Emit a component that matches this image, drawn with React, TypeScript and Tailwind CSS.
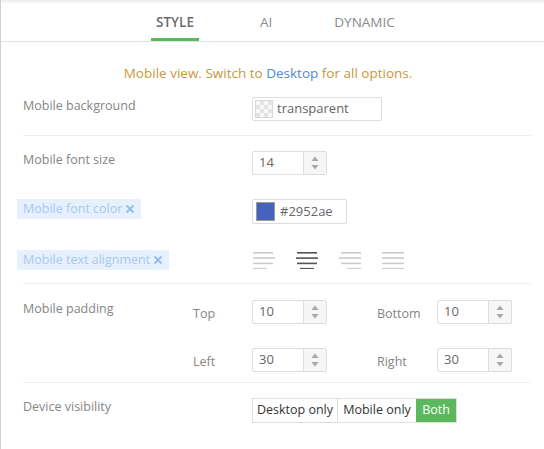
import React from 'react';

const FONT = { fontFamily: '"Open Sans", "Noto Sans", sans-serif' };

function Spinner() {
  return (
    <div className="flex w-[23px] flex-col items-center justify-center gap-[4px] border-l border-[#dddddd] bg-[#f6f6f6]">
      <svg width="8" height="5" viewBox="0 0 8 5">
        <path d="M0.5 5 L4 0.5 L7.5 5 Z" fill="#a8a8a8" />
      </svg>
      <svg width="8" height="5" viewBox="0 0 8 5">
        <path d="M0.5 0 L4 4.5 L7.5 0 Z" fill="#a8a8a8" />
      </svg>
    </div>
  );
}

function NumberInput({ value }: { value: string }) {
  return (
    <div className="flex h-[24px] w-[75px] rounded-[2px] border border-[#dddddd] bg-white">
      <div className="flex flex-1 items-center pl-[6px] text-[13px] text-[#666666]">{value}</div>
      <Spinner />
    </div>
  );
}

function Label({ children }: { children: React.ReactNode }) {
  return <div className="w-[229px] shrink-0 text-[12.5px] leading-[18px] text-[#858585]">{children}</div>;
}

function SubLabel({ children }: { children: React.ReactNode }) {
  return <div className="flex h-[24px] items-center pt-[4px] text-[12.5px] text-[#858585]">{children}</div>;
}

function OverrideLabel({ children }: { children: React.ReactNode }) {
  return (
    <div className="flex w-[229px] shrink-0">
      <span className="-ml-[6px] flex h-[20px] items-center gap-[3px] bg-[#e7f1fd] px-[6px] text-[12.5px] text-[#a6c8f3]">
        {children}
        <svg width="10" height="10" viewBox="0 0 10 10">
          <path d="M1.5 1.5 L8.5 8.5 M8.5 1.5 L1.5 8.5" stroke="#92bbef" strokeWidth="1.8" />
        </svg>
      </span>
    </div>
  );
}

type Align = 'left' | 'center' | 'right' | 'justify';

function AlignIcon({ align, active }: { align: Align; active?: boolean }) {
  const widths = [20, 22, 20, 14];
  const color = active ? '#555555' : '#cccccc';
  return (
    <svg width="22" height="18" viewBox="0 0 22 18">
      {widths.map((w, i) => {
        const width = align === 'justify' ? 22 : w;
        const x = align === 'left' || align === 'justify' ? 0 : align === 'right' ? 22 - width : (22 - width) / 2;
        return <rect key={i} x={x} y={1 + i * 5.3} width={width} height="1.6" fill={color} />;
      })}
    </svg>
  );
}

export default function App() {
  return (
    <div style={FONT} className="relative h-[449px] w-[544px] overflow-hidden border-l border-[#d0d0d0] bg-white">
      <div className="pointer-events-none absolute inset-x-0 top-0 h-[4px] bg-gradient-to-b from-[#ececec] to-transparent" />

      {/* tabs */}
      <div className="flex h-[42px] items-end border-b border-[#e2e2e2] pl-[145px]">
        <div className="flex h-full gap-[50px] text-[13.5px] uppercase">
          <div className="flex flex-col items-center justify-end px-[5px]">
            <span className="pb-[6px] font-semibold text-[#6b6b6b]">Style</span>
            <div className="h-[3px] w-[48px] bg-[#5cb85c]" />
          </div>
          <div className="flex flex-col items-center justify-end px-[6px]">
            <span className="pb-[9px] text-[#8a8a8a]">AI</span>
          </div>
          <div className="flex flex-col items-center justify-end px-[6px]">
            <span className="pb-[9px] text-[#8a8a8a]">Dynamic</span>
          </div>
        </div>
      </div>

      <div className="pr-[13px] pl-[22px]">
        <div className="mr-[18px] pt-[22px] text-center text-[13.5px] leading-[18px] text-[#c9973c]">
          Mobile view. Switch to <span className="text-[#4e8ccd]">Desktop</span> for all options.
        </div>

        {/* background */}
        <div className="mt-[15px] flex items-start border-b border-[#eeeeee] pb-[14px]">
          <Label>Mobile background</Label>
          <div className="flex h-[24px] w-[130px] items-center gap-[4px] rounded-[2px] border border-[#dddddd] px-[2px]">
            <div className="h-[18px] w-[18px] border border-[#d8d8d8] bg-[conic-gradient(#e4e4e4_25%,#f8f8f8_0_50%,#e4e4e4_0_75%,#f8f8f8_0)] bg-[length:8px_8px]" />
            <span className="text-[13px] text-[#666666]">transparent</span>
          </div>
        </div>

        {/* font size */}
        <div className="mt-[15px] flex items-start">
          <Label>Mobile font size</Label>
          <NumberInput value="14" />
        </div>

        {/* font color */}
        <div className="mt-[24px] flex items-start">
          <OverrideLabel>Mobile font color</OverrideLabel>
          <div className="flex h-[25px] w-[95px] items-center gap-[5px] rounded-[2px] border border-[#dddddd] px-[3px]">
            <div className="h-[19px] w-[19px] border border-[#9a9a9a] bg-[#4562bc]" />
            <span className="text-[13px] text-[#666666]">#2952ae</span>
          </div>
        </div>

        {/* text alignment */}
        <div className="mt-[26px] flex items-start border-b border-[#eeeeee] pb-[13px]">
          <OverrideLabel>Mobile text alignment</OverrideLabel>
          <div className="flex h-[20px] items-center gap-[21px] pl-[1px]">
            <AlignIcon align="left" />
            <AlignIcon align="center" active />
            <AlignIcon align="right" />
            <AlignIcon align="justify" />
          </div>
        </div>

        {/* padding */}
        <div className="mt-[16px] flex items-start border-b border-[#eeeeee] pb-[10px]">
          <div className="w-[170px] shrink-0 text-[12.5px] leading-[18px] text-[#858585]">Mobile padding</div>
          <div className="grid grid-cols-[59px_75px_50px_60px_75px] gap-y-[24px]">
            <SubLabel>Top</SubLabel>
            <NumberInput value="10" />
            <div />
            <SubLabel>Bottom</SubLabel>
            <NumberInput value="10" />
            <SubLabel>Left</SubLabel>
            <NumberInput value="30" />
            <div />
            <SubLabel>Right</SubLabel>
            <NumberInput value="30" />
          </div>
        </div>

        {/* device visibility */}
        <div className="mt-[15px] flex items-start">
          <Label>Device visibility</Label>
          <div className="flex h-[25px] border border-[#dddddd] text-[12.5px] text-[#333333]">
            <div className="flex w-[85px] items-center justify-center border-r border-[#dddddd]">Desktop only</div>
            <div className="flex w-[78px] items-center justify-center">Mobile only</div>
            <div className="flex w-[40px] items-center justify-center bg-[#5cb85c] text-white">Both</div>
          </div>
        </div>
      </div>
    </div>
  );
}
